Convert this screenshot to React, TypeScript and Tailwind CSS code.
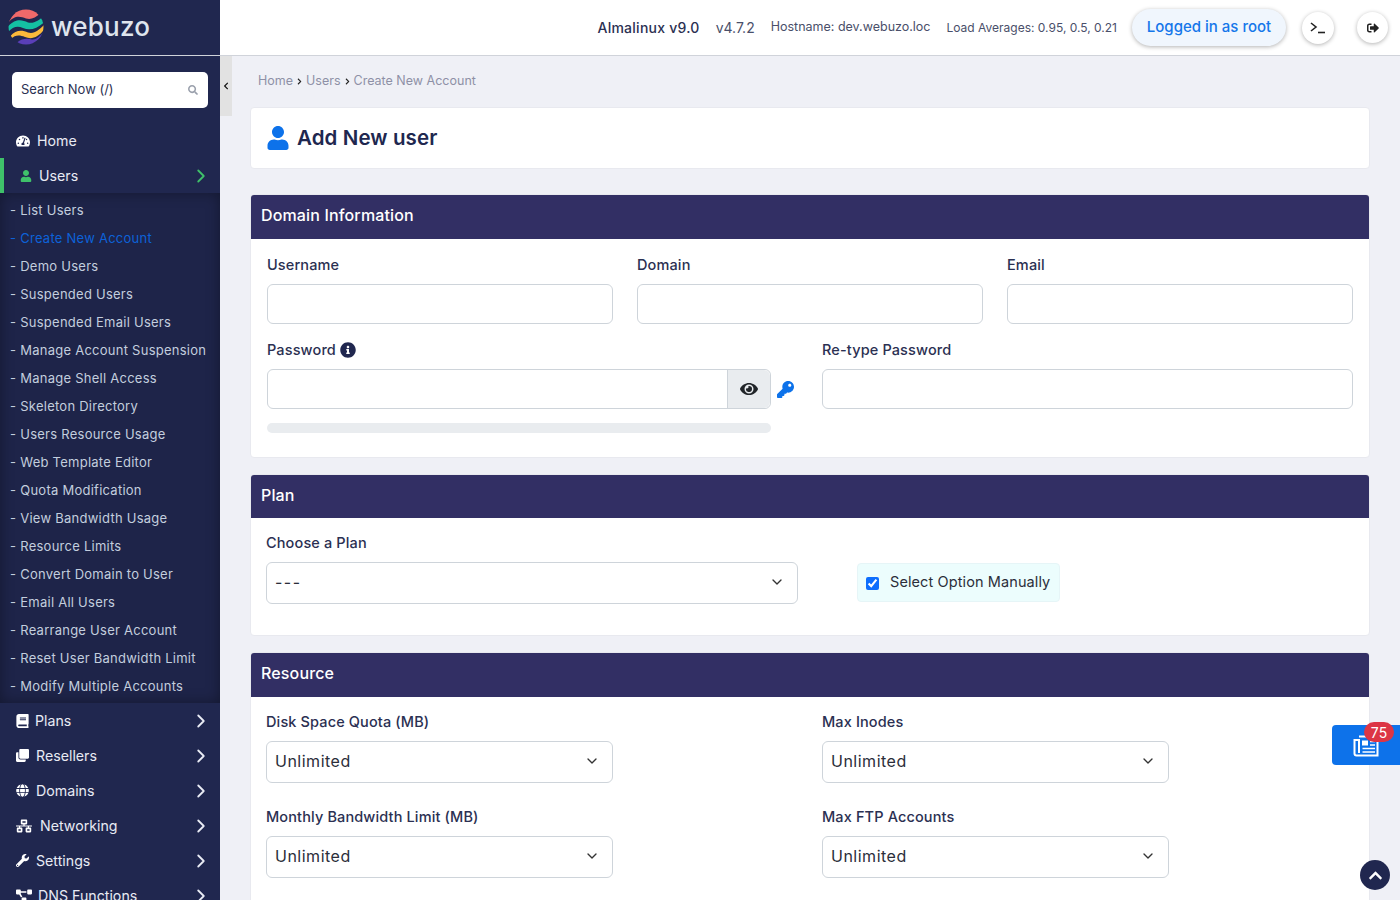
import type { ReactNode } from "react";
import {
  FaBook,
  FaChevronLeft,
  FaChevronRight,
  FaChevronUp,
  FaClone,
  FaEye,
  FaGlobe,
  FaInfoCircle,
  FaKey,
  FaNetworkWired,
  FaProjectDiagram,
  FaSearch,
  FaSignOutAlt,
  FaTachometerAlt,
  FaUser,
  FaWrench,
} from "react-icons/fa";
import { FiChevronDown, FiChevronRight } from "react-icons/fi";

const SUB_ITEMS = [
  "List Users",
  "Create New Account",
  "Demo Users",
  "Suspended Users",
  "Suspended Email Users",
  "Manage Account Suspension",
  "Manage Shell Access",
  "Skeleton Directory",
  "Users Resource Usage",
  "Web Template Editor",
  "Quota Modification",
  "View Bandwidth Usage",
  "Resource Limits",
  "Convert Domain to User",
  "Email All Users",
  "Rearrange User Account",
  "Reset User Bandwidth Limit",
  "Modify Multiple Accounts",
];

function Logo() {
  return (
    <svg width="36" height="36" viewBox="0 0 36 36" className="shrink-0">
      <defs>
        <clipPath id="globe">
          <circle cx="18" cy="18" r="17.5" />
        </clipPath>
      </defs>
      <g clipPath="url(#globe)">
        <path d="M0 14C6 6 12 7 18 9.5C23 11 27 9 33 4V-2H0Z" fill="#f0696a" />
        <path d="M0 17.5C8 9 14 11 20 13.5C26 15 31 11 36 7V13.5C28 20 22 22 15 19C9 16.5 5 18 0 23Z" fill="#14c1a3" />
        <path d="M2 27.5C8 20.5 14 21 20 23.5C26 25.5 31 21 36 16V21C30 28 24 31 17 28C11 25.5 7 26 3 30Z" fill="#fbb93b" />
        <path d="M9 33.5C14 29 20 29.5 24 30.5C28 31 32 27 36 23V36H9Z" fill="#5a3fb8" />
      </g>
    </svg>
  );
}

function NewsIcon() {
  return (
    <svg width="26" height="22" viewBox="0 0 26 22" fill="none" stroke="#fff" strokeWidth="2">
      <path d="M6 1.5H24.5V20.5H3.5Q1.5 20.5 1.5 18.5V5H6V18" />
      <path d="M9 5.5h6v5H9Z" fill="#fff" stroke="none" />
      <path d="M9.5 13.5H22M9.5 17H22M17 6.5H22M17 10H22" strokeWidth="1.6" />
    </svg>
  );
}

function NavItem({ icon, label, gap = "ml-[7px]" }: { icon: ReactNode; label: string; gap?: string }) {
  return (
    <div className="flex h-[35px] shrink-0 items-center pl-4 pr-2 text-[#e8ebf4]">
      <span className="flex w-[13px] justify-start text-white">{icon}</span>
      <span className={`${gap} text-[14.2px]`}>{label}</span>
      <FiChevronRight className="ml-auto text-[22px]" />
    </div>
  );
}

function Field({ label, children, className = "" }: { label: ReactNode; children: ReactNode; className?: string }) {
  return (
    <div className={className}>
      <div className="mb-[9px] flex h-[20px] items-center text-[14.5px] font-medium tracking-[0.13px] text-[#2b3052]">{label}</div>
      {children}
    </div>
  );
}

function TextBox() {
  return <div className="h-10 rounded-md border border-[#ced4da] bg-white" />;
}

function SelectBox({ value }: { value: string }) {
  return (
    <div className="flex h-[42px] items-center justify-between rounded-md border border-[#ced4da] bg-white pb-[2px] pl-2 pr-3 text-[16px] tracking-[0.5px] text-[#2b2e3a]">
      <span className={value === "---" ? "tracking-[1.5px]" : ""}>{value}</span>
      <FiChevronDown className="text-[16px] text-[#333]" />
    </div>
  );
}

function SectionHeader({ title, h }: { title: string; h: string }) {
  return (
    <div className={`flex ${h} items-center rounded-t-[3px] bg-[#322f64] pl-2.5 text-[16px] font-medium tracking-[0.15px] text-white`}>
      {title}
    </div>
  );
}

export default function App() {
  return (
    <div className="relative flex h-screen w-full overflow-hidden bg-[#eff0f6] font-['Inter',sans-serif]">
      {/* Sidebar */}
      <aside className="flex w-[220px] shrink-0 flex-col overflow-hidden bg-[#20274f]">
        <div className="flex h-[56px] shrink-0 items-center gap-[7px] border-b border-[#d0d3da] pb-[2px] pl-2">
          <Logo />
          <span className="text-[26px] font-medium leading-none tracking-[0.2px] text-[#dfe5ee]">webuzo</span>
        </div>
        <div className="shrink-0 px-3 pt-4 pb-[15px]">
          <div className="flex h-9 items-center justify-between rounded-[5px] bg-white pl-[9px] pr-[10px] text-[13px] text-[#2b3052]">
            <span>Search Now (/)</span>
            <FaSearch className="text-[10px] text-[#9aa0ac]" />
          </div>
        </div>
        <div className="flex h-[35px] shrink-0 items-center pl-4 text-[#e8ebf4]">
          <FaTachometerAlt className="text-[14px] text-white" />
          <span className="ml-[7px] text-[14.2px]">Home</span>
        </div>
        <div className="flex h-[35px] shrink-0 items-center border-l-4 border-[#3fc16a] pl-4 pr-2 text-[#e8ebf4]">
          <FaUser className="text-[12px] text-[#3fc16a]" />
          <span className="ml-[7px] text-[14.2px]">Users</span>
          <FiChevronRight className="ml-auto text-[22px] text-[#3fc16a]" />
        </div>
        <div className="shrink-0 bg-[#1e2449] pt-[4px] pb-[2px] shadow-[inset_0_0_14px_rgba(0,0,0,0.35)]">
          {SUB_ITEMS.map((item) => (
            <div
              key={item}
              className={`flex h-[28px] items-center pl-2.5 text-[13px] tracking-[0.25px] ${item === "Create New Account" ? "text-[#0d62d8]" : "text-[#c3cede]"}`}
            >
              <span className="mr-[4px]">-</span>
              {item}
            </div>
          ))}
        </div>
        <NavItem icon={<FaBook className="text-[14px]" />} label="Plans" gap="ml-[6px]" />
        <NavItem icon={<FaClone className="text-[13px]" />} label="Resellers" />
        <NavItem icon={<FaGlobe className="text-[13px]" />} label="Domains" />
        <NavItem icon={<FaNetworkWired className="shrink-0 text-[16px]" />} label="Networking" gap="ml-[11px]" />
        <NavItem icon={<FaWrench className="text-[13px]" />} label="Settings" />
        <NavItem icon={<FaProjectDiagram className="shrink-0 text-[16px]" />} label="DNS Functions" gap="ml-[9px]" />
      </aside>

      <div className="flex min-w-0 flex-1 flex-col">
        {/* Top bar */}
        <header className="flex h-[56px] shrink-0 items-center justify-end border-b border-[#d0d3da] bg-white pr-3">
          <span className="text-[14px] font-medium tracking-[0.25px] text-[#2b3052]">Almalinux v9.0</span>
          <span className="ml-4 text-[14px] text-[#4a4f6a]">v4.7.2</span>
          <span className="ml-4 text-[12.5px] text-[#4a4f6a]">Hostname: dev.webuzo.loc</span>
          <span className="ml-4 text-[12px] text-[#4a4f6a]">Load Averages: 0.95, 0.5, 0.21</span>
          <span className="ml-[15px] flex h-[37px] w-[154px] items-center justify-center rounded-full bg-[#f0f6fd] text-[15px] font-medium text-[#1577ea] shadow-[0_1px_4px_rgba(0,0,0,0.3)]">
            Logged in as root
          </span>
          <span className="ml-4 flex h-8 w-8 items-center justify-center rounded-full bg-white shadow-[0_1px_4px_rgba(0,0,0,0.3)]">
            <svg width="16" height="12" viewBox="0 0 16 12" fill="none" stroke="#222" strokeWidth="1.6">
              <path d="M1 1l5 4-5 4" />
              <path d="M8 10.5h7" />
            </svg>
          </span>
          <span className="ml-[23px] flex h-[31px] w-[31px] items-center justify-center rounded-full bg-white shadow-[0_1px_4px_rgba(0,0,0,0.3)]">
            <FaSignOutAlt className="text-[12px] text-[#222]" />
          </span>
        </header>

        <div className="flex min-h-0 flex-1">
          <div className="flex h-[60px] w-3 shrink-0 items-center justify-center bg-[#e2e2e2]">
            <FaChevronLeft className="text-[8px] text-[#111]" />
          </div>

          <main className="min-w-0 flex-1 pl-[18px] pr-[30px]">
            <div className="flex h-[51px] items-center pl-2 text-[12.5px] text-[#8e90a6]">
              Home
              <FaChevronRight className="mx-[3px] text-[7px] text-[#222]" />
              Users
              <FaChevronRight className="mx-[3px] text-[7px] text-[#222]" />
              Create New Account
            </div>

            <div className="flex h-[62px] items-center rounded-[4px] border border-[#e8e9ef] bg-white pl-[15px]">
              <FaUser className="text-[24px] text-[#0d72ea]" />
              <span className="ml-[7px] text-[20.5px] font-semibold tracking-[0.1px] text-[#20274f]">Add New user</span>
            </div>

            <section className="mt-[25px] h-[264px] rounded-[4px] border border-[#e8e9ef] bg-white">
              <SectionHeader title="Domain Information" h="h-[44px] pb-[4px]" />
              <div className="px-4 pt-4">
                <div className="grid grid-cols-3 gap-6">
                  <Field label="Username"><TextBox /></Field>
                  <Field label="Domain"><TextBox /></Field>
                  <Field label="Email"><TextBox /></Field>
                </div>
                <div className="mt-[16px] flex">
                  <div className="w-[504px]">
                    <Field
                      label={
                        <>
                          Password
                          <FaInfoCircle className="ml-1 text-[16px] text-[#20274f]" />
                        </>
                      }
                    >
                      <div className="flex h-10 rounded-md border border-[#ced4da] bg-white">
                        <div className="flex-1" />
                        <div className="flex w-[43px] items-center justify-center rounded-r-md border-l border-[#ced4da] bg-[#e9ecef]">
                          <FaEye className="text-[18px] text-[#212529]" />
                        </div>
                      </div>
                    </Field>
                    <div className="mt-[14px] h-2.5 rounded-full bg-[#e9ecef]" />
                  </div>
                  <div className="w-[51px] pt-[29px] pl-[6px]">
                    <div className="flex h-10 items-center">
                      <FaKey className="text-[17px] text-[#0d72ea]" />
                    </div>
                  </div>
                  <Field label="Re-type Password" className="flex-1"><TextBox /></Field>
                </div>
              </div>
            </section>

            <section className="mt-4 h-[162px] rounded-[4px] border border-[#e8e9ef] bg-white">
              <SectionHeader title="Plan" h="h-[43px] pb-[3px]" />
              <div className="flex items-start pl-[15px] pt-[15px]">
                <Field label="Choose a Plan" className="w-[532px]">
                  <SelectBox value="---" />
                </Field>
                <label className="mt-[30px] ml-[59px] flex h-[39px] w-[203px] items-center rounded-[4px] border border-[#e6f5f7] bg-[#ecfdfd] pl-2 text-[14.5px] tracking-[0.1px] text-[#2b2e3a]">
                  <input type="checkbox" defaultChecked className="mt-[1px] h-[13px] w-[13px] accent-[#0d6efd]" />
                  <span className="ml-[11px] pb-[2px]">Select Option Manually</span>
                </label>
              </div>
            </section>

            <section className="mt-4 rounded-t-[4px] border border-[#e8e9ef] bg-white pb-10">
              <SectionHeader title="Resource" h="h-[44px] pb-[4px]" />
              <div className="grid grid-cols-[347px_347px] gap-x-[209px] gap-y-6 pl-[15px] pt-[15px]">
                <Field label="Disk Space Quota (MB)"><SelectBox value="Unlimited" /></Field>
                <Field label="Max Inodes"><SelectBox value="Unlimited" /></Field>
                <Field label="Monthly Bandwidth Limit (MB)"><SelectBox value="Unlimited" /></Field>
                <Field label="Max FTP Accounts"><SelectBox value="Unlimited" /></Field>
              </div>
            </section>
          </main>
        </div>
      </div>

      {/* Floating buttons */}
      <div className="absolute left-[1332px] top-[725px] flex h-10 w-[68px] items-center justify-center rounded-l-[4px] bg-[#0d72ea] pt-[2px]">
        <NewsIcon />
        <span className="absolute left-[32px] top-[-3px] flex h-[20px] w-[30px] items-center justify-center rounded-full bg-[#dc3545] text-[14px] text-white">75</span>
      </div>
      <div className="absolute left-[1360px] top-[860px] flex h-[30px] w-[30px] items-center justify-center rounded-full bg-[#20274f]">
        <FaChevronUp className="text-[15px] text-white" />
      </div>
    </div>
  );
}
